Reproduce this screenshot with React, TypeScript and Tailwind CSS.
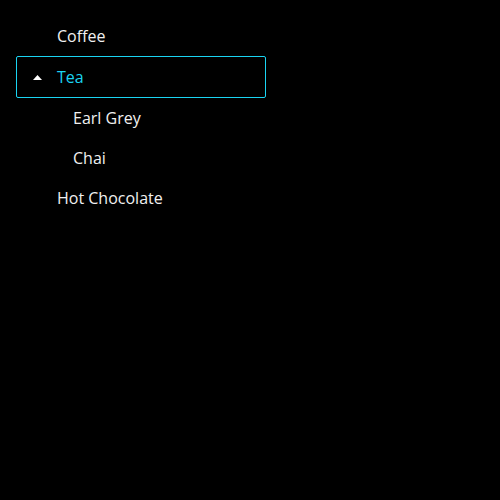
import React from "react";

export default function App() {
  const font = { fontFamily: '"Open Sans", "Noto Sans", sans-serif' };
  return (
    <div className="w-[500px] h-[500px] bg-black pt-4 pl-4" style={font}>
      <ul className="w-[250px] text-[16px] text-[#f0f0f0]">
        <li className="h-10 flex items-center pl-[41px]">Coffee</li>
        <li className="h-[42px] flex items-center border border-[#1ad4f2] rounded-[2px] text-[#1ad4f2]">
          <span className="w-[40px] flex justify-end pr-[15px]">
            <svg width="9" height="5" viewBox="0 0 9 5">
              <polygon points="4.5,0 9,5 0,5" fill="#ffffff" />
            </svg>
          </span>
          <span>Tea</span>
        </li>
        <li className="h-10 flex items-center pl-[57px]">Earl Grey</li>
        <li className="h-10 flex items-center pl-[57px]">Chai</li>
        <li className="h-10 flex items-center pl-[41px]">Hot Chocolate</li>
      </ul>
    </div>
  );
}
